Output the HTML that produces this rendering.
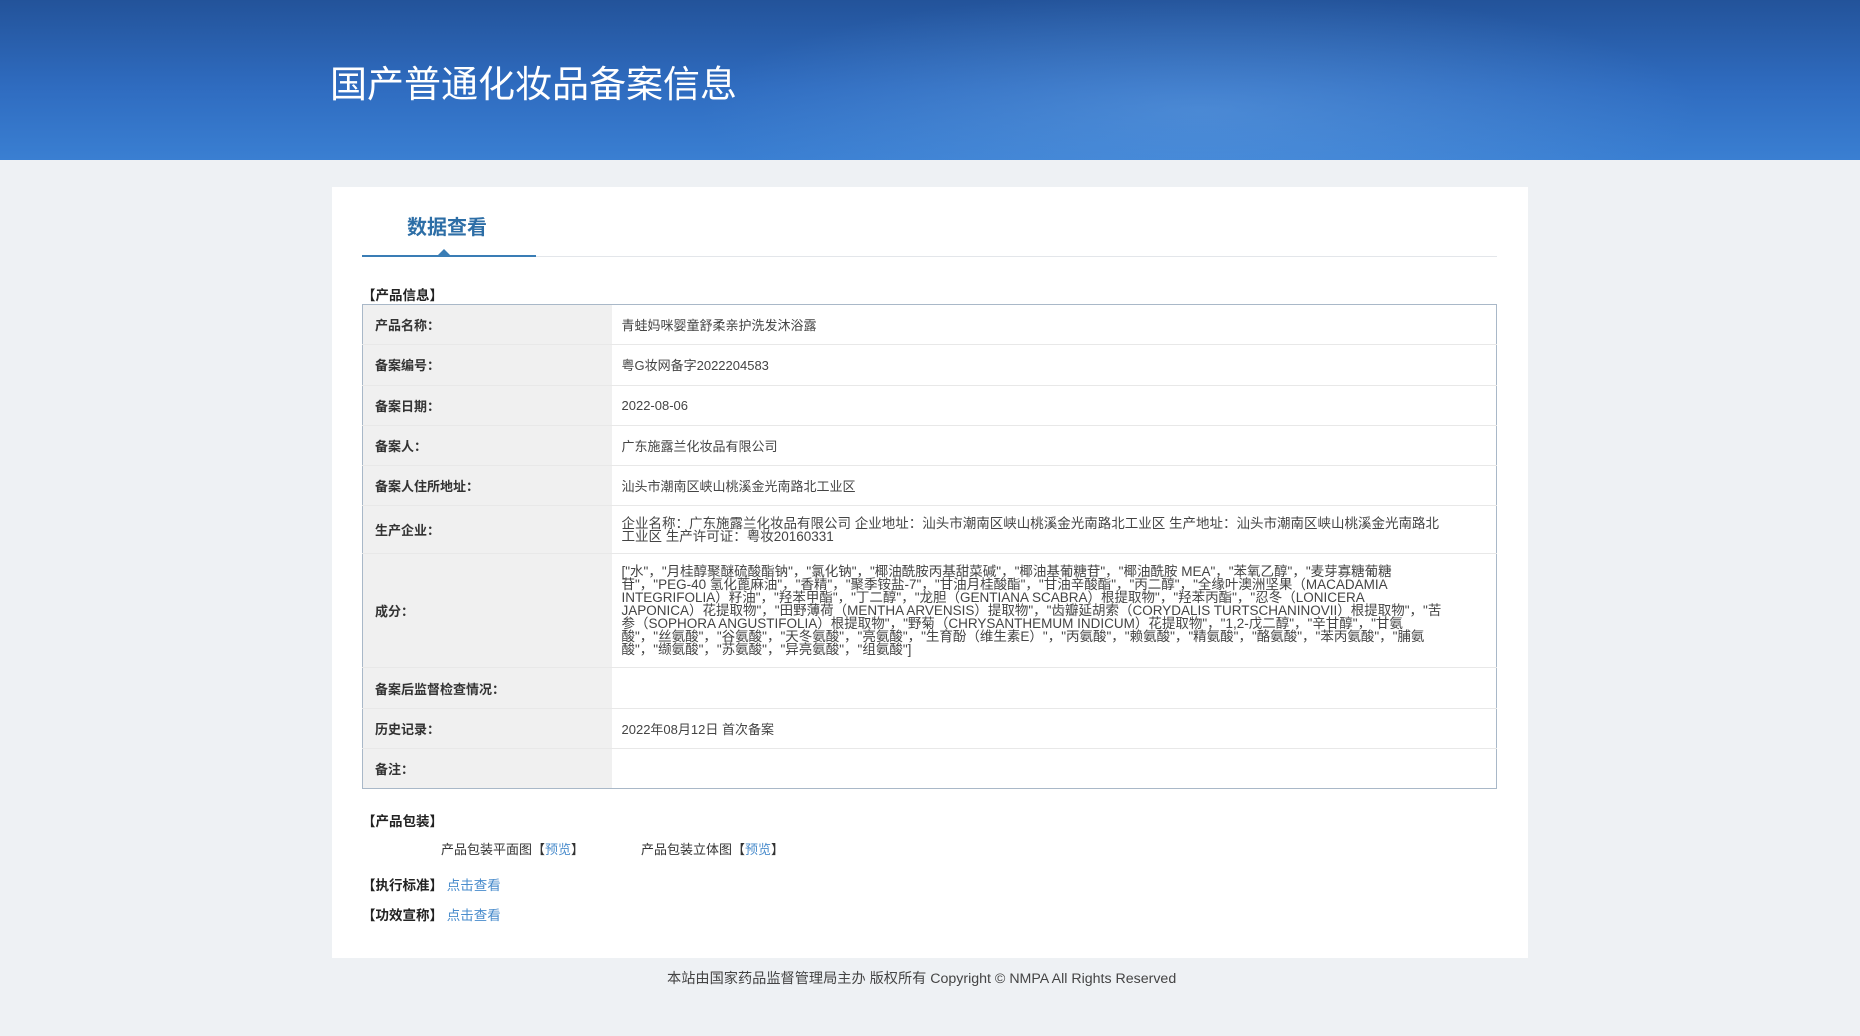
<!DOCTYPE html>
<html><head><meta charset="utf-8"><style>
*{margin:0;padding:0;box-sizing:border-box}
body{width:1860px;height:1036px;background:#eef1f4;font-family:"Liberation Sans","Noto Sans CJK SC",sans-serif;color:#333;position:relative;overflow:hidden}
.hdr{position:absolute;left:0;top:0;width:1860px;height:160px;background:radial-gradient(ellipse 500px 120px at 1200px 110px,rgba(120,180,240,.35),transparent),linear-gradient(180deg,#23539a 0%,#2f6cc0 55%,#3a7fd2 100%)}
.hdr h1{position:absolute;left:330px;top:62px;font-size:37px;font-weight:normal;color:#fff;line-height:46px}
.card{position:absolute;left:332px;top:187px;width:1196px;height:771px;background:#fff}
.tab{position:absolute;left:407px;top:215px;font-size:20px;font-weight:bold;color:#2d6ea6;line-height:26px}
.gl{position:absolute;left:362px;top:256px;width:1135px;height:1px;background:#e3e6ea}
.bl{position:absolute;left:362px;top:255px;width:174px;height:2px;background:#3a7db5}
.tri{position:absolute;left:438px;top:249px;width:0;height:0;border-left:6px solid transparent;border-right:6px solid transparent;border-bottom:6px solid #3a7db5}
.sec{position:absolute;left:362px;font-size:13.5px;font-weight:bold;color:#222}
table{position:absolute;left:362px;top:304px;width:1135px;border-collapse:collapse;border:1px solid #a9b8c8;font-size:13px}
td{border-bottom:1px solid #e8e8e8;height:40.3px;vertical-align:middle}
td.l{width:249px;background:#f0f0f0;padding-left:12px;font-weight:bold;color:#333}
td.v{padding-left:10px;color:#444}
.ing{font-size:13.5px;line-height:13px;white-space:nowrap;letter-spacing:0}
.t{position:absolute;font-size:13px;color:#333}
a{color:#4a8ccc;text-decoration:none}
.ft{position:absolute;top:968px;left:667px;font-size:14.2px;color:#444}
</style></head><body>
<div class="hdr"><h1>国产普通化妆品备案信息</h1></div>
<div class="card"></div>
<div class="tab">数据查看</div>
<div class="gl"></div><div class="bl"></div><div class="tri"></div>
<div class="sec" style="top:284px">【产品信息】</div>
<table>
<tr><td class="l">产品名称：</td><td class="v">青蛙妈咪婴童舒柔亲护洗发沐浴露</td></tr>
<tr><td class="l">备案编号：</td><td class="v">粤G妆网备字2022204583</td></tr>
<tr><td class="l">备案日期：</td><td class="v">2022-08-06</td></tr>
<tr><td class="l">备案人：</td><td class="v">广东施露兰化妆品有限公司</td></tr>
<tr><td class="l">备案人住所地址：</td><td class="v">汕头市潮南区峡山桃溪金光南路北工业区</td></tr>
<tr><td class="l" style="height:48px">生产企业：</td><td class="v ing">企业名称：广东施露兰化妆品有限公司 企业地址：汕头市潮南区峡山桃溪金光南路北工业区 生产地址：汕头市潮南区峡山桃溪金光南路北<br>工业区 生产许可证：粤妆20160331</td></tr>
<tr><td class="l" style="height:114px">成分：</td><td class="v ing">["水"，"月桂醇聚醚硫酸酯钠"，"氯化钠"，"椰油酰胺丙基甜菜碱"，"椰油基葡糖苷"，"椰油酰胺 MEA"，"苯氧乙醇"，"麦芽寡糖葡糖<br>苷"，"PEG-40 氢化蓖麻油"，"香精"，"聚季铵盐-7"，"甘油月桂酸酯"，"甘油辛酸酯"，"丙二醇"，"全缘叶澳洲坚果（MACADAMIA<br>INTEGRIFOLIA）籽油"，"羟苯甲酯"，"丁二醇"，"龙胆（GENTIANA SCABRA）根提取物"，"羟苯丙酯"，"忍冬（LONICERA<br>JAPONICA）花提取物"，"田野薄荷（MENTHA ARVENSIS）提取物"，"齿瓣延胡索（CORYDALIS TURTSCHANINOVII）根提取物"，"苦<br>参（SOPHORA ANGUSTIFOLIA）根提取物"，"野菊（CHRYSANTHEMUM INDICUM）花提取物"，"1,2-戊二醇"，"辛甘醇"，"甘氨<br>酸"，"丝氨酸"，"谷氨酸"，"天冬氨酸"，"亮氨酸"，"生育酚（维生素E）"，"丙氨酸"，"赖氨酸"，"精氨酸"，"酪氨酸"，"苯丙氨酸"，"脯氨<br>酸"，"缬氨酸"，"苏氨酸"，"异亮氨酸"，"组氨酸"]</td></tr>
<tr><td class="l">备案后监督检查情况：</td><td class="v"></td></tr>
<tr><td class="l">历史记录：</td><td class="v">2022年08月12日 首次备案</td></tr>
<tr><td class="l" style="border-bottom:none">备注：</td><td class="v" style="border-bottom:none"></td></tr>
</table>
<div class="sec" style="top:810px">【产品包装】</div>
<div class="t" style="left:441px;top:839px">产品包装平面图【<a>预览</a>】</div>
<div class="t" style="left:641px;top:839px">产品包装立体图【<a>预览</a>】</div>
<div class="sec" style="top:874px">【执行标准】 <a style="font-weight:normal">点击查看</a></div>
<div class="sec" style="top:904px">【功效宣称】 <a style="font-weight:normal">点击查看</a></div>
<div class="ft">本站由国家药品监督管理局主办 版权所有 Copyright © NMPA All Rights Reserved</div>
</body></html>
